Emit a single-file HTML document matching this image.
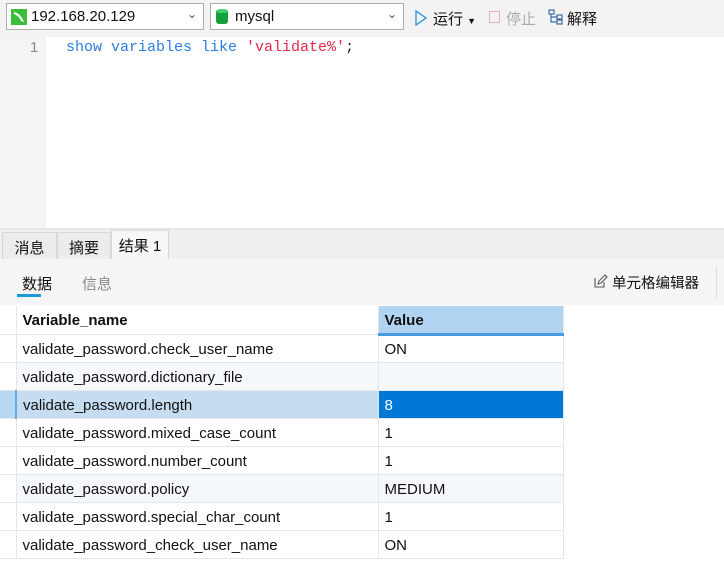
<!DOCTYPE html>
<html><head><meta charset="utf-8"><style>
*{box-sizing:border-box;margin:0;padding:0}
body{width:724px;height:568px;overflow:hidden;background:#fff;font-family:"Liberation Sans","Noto Sans CJK SC",sans-serif;font-size:15px;color:#111;position:relative}
.abs{position:absolute}
.tb{left:0;top:0;width:724px;height:37px;background:#f3f3f3}
.sel{top:3px;height:27px;border:1px solid #adadad;background:#fff;display:flex;align-items:center;font-size:15px}
.ed{left:0;top:37px;width:724px;height:191px;background:#fff}
.gut{left:0;top:37px;width:46px;height:191px;background:#f5f5f5}
.code{left:66px;top:38px;font-family:"Liberation Mono",monospace;font-size:15px;line-height:20px;color:#2b7ee0}
.tabs{left:0;top:228px;width:724px;height:31px;background:#efefef;border-top:2px solid #e6e6e6}
.tab{top:232px;height:27px;border:1px solid #d8d8d8;border-bottom:none;background:#ececec;font-size:15px;padding:4px 0 0 0;text-align:center}
.sub{left:0;top:259px;width:724px;height:46px;background:#f5f5f5}
table{position:absolute;left:0;top:306px;border-collapse:collapse;font-size:15px}
td{height:28px;border:1px solid #e6e6e6;padding:2px 6px 0 6px;white-space:nowrap}
td.g{width:16px;padding:0;border-left:none}
</style></head><body>
<div class="abs tb"></div>
<div class="abs sel" style="left:6px;width:198px">
 <svg width="16" height="16" style="margin:0 4px 0 4px"><rect width="16" height="16" fill="#3bbf3b"/><path d="M3 3 C8 4 11 8 13 13 L10 12 C9 9 6 6 3 5Z" fill="#fff"/></svg>192.168.20.129
 <span style="position:absolute;right:6px;top:3px;color:#555;font-size:12px">⌄</span></div>
<div class="abs sel" style="left:210px;width:194px">
 <svg width="14" height="18" style="margin:0 6px 0 4px"><rect x="1" y="2" width="12" height="14" rx="3" fill="#16a03c"/><ellipse cx="7" cy="3" rx="6" ry="2" fill="#3fd06a"/></svg>mysql
 <span style="position:absolute;right:6px;top:3px;color:#555;font-size:12px">⌄</span></div>
<svg class="abs" style="left:415px;top:10px" width="12" height="16"><path d="M1 1 L11 8 L1 15Z" fill="none" stroke="#2b8ee0" stroke-width="1.3"/></svg>
<div class="abs" style="left:433px;top:8px">运行 <span style="font-size:9px">▼</span></div>
<div class="abs" style="left:489px;top:11px;width:11px;height:12px;border:1px solid #e4b4b4"></div>
<div class="abs" style="left:506px;top:8px;color:#aaa">停止</div>
<svg class="abs" style="left:548px;top:9px" width="16" height="16"><g fill="none" stroke="#3a6ea5" stroke-width="1.2"><rect x="1" y="1" width="5" height="4"/><rect x="9" y="6" width="5" height="4"/><rect x="9" y="11" width="5" height="4"/><path d="M3 5 V13 H9 M3 8 H9"/></g></svg>
<div class="abs" style="left:567px;top:8px">解释</div>
<div class="abs ed"></div><div class="abs gut"></div>
<div class="abs" style="left:30px;top:38px;color:#888;font-size:15px;line-height:20px">1</div>
<div class="abs code">show variables like <span style="color:#e8274a">'validate%'</span><span style="color:#222">;</span></div>
<div class="abs tabs"></div>
<div class="abs tab" style="left:2px;width:55px">消息</div>
<div class="abs tab" style="left:57px;width:54px">摘要</div>
<div class="abs tab" style="left:111px;width:58px;background:#f7f7f7;top:230px;height:29px">结果 1</div>
<div class="abs sub"></div>
<div class="abs" style="left:22px;top:273px">数据</div>
<div class="abs" style="left:17px;top:294px;width:24px;height:3px;background:#1a9ad6"></div>
<div class="abs" style="left:82px;top:273px;color:#888">信息</div>
<svg class="abs" style="left:593px;top:274px" width="15" height="15"><path d="M2 4 V13 H11 V8 M5 10 L6 7 L12 1 L14 3 L8 9Z" fill="none" stroke="#555" stroke-width="1.1"/></svg>
<div class="abs" style="left:612px;top:272px;font-size:14.5px">单元格编辑器</div>
<div class="abs" style="left:716px;top:266px;width:1px;height:32px;background:#ddd"></div>
<table>
<tr><td class="g" style="border-top:none"></td><td style="width:362px;font-weight:bold;border-top:none">Variable_name</td><td style="width:185px;font-weight:bold;background:#afd3f0;border-bottom:3px solid #4a9de0;border-top:none">Value</td></tr>
<tr><td class="g"></td><td>validate_password.check_user_name</td><td>ON</td></tr>
<tr><td class="g"></td><td style="background:#f6f9fc">validate_password.dictionary_file</td><td style="background:#f6f9fc"></td></tr>
<tr><td class="g" style="background:#b7d6f0;border-right:2px solid #6aaae0"></td><td style="background:#c6ddf1">validate_password.length</td><td style="background:#0078d7;color:#fff">8</td></tr>
<tr><td class="g"></td><td>validate_password.mixed_case_count</td><td>1</td></tr>
<tr><td class="g"></td><td>validate_password.number_count</td><td>1</td></tr>
<tr><td class="g"></td><td style="background:#f4f8fc">validate_password.policy</td><td style="background:#f4f8fc">MEDIUM</td></tr>
<tr><td class="g"></td><td>validate_password.special_char_count</td><td>1</td></tr>
<tr><td class="g"></td><td>validate_password_check_user_name</td><td>ON</td></tr>
</table>
</body></html>
